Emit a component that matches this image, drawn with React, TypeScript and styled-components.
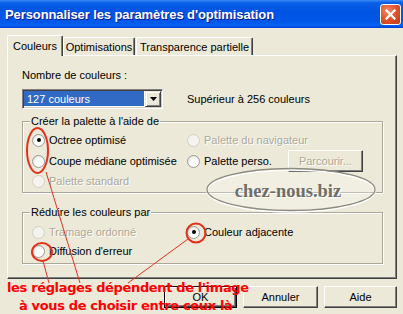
import React from 'react'
import styled, { createGlobalStyle } from 'styled-components'

const GlobalStyle = createGlobalStyle`
  html, body {
    margin: 0;
    padding: 0;
    background: #ece9d8;
  }
  body {
    width: 403px;
    height: 314px;
    overflow: hidden;
  }
`

const Window = styled.div`
  position: relative;
  width: 403px;
  height: 314px;
  background: #ece9d8;
  font-family: 'Liberation Sans', Arial, sans-serif;
  font-size: 11px;
  color: #000;
  overflow: hidden;
`

const TitleBar = styled.div`
  height: 28px;
  display: flex;
  align-items: center;
  justify-content: space-between;
  padding: 0 2px 0 5px;
  box-sizing: border-box;
  background: linear-gradient(
    180deg,
    #3b8cf6 0%,
    #0a5fe6 10%,
    #0054e3 40%,
    #0058ea 80%,
    #0763f0 90%,
    #003dd7 100%
  );
`

const Title = styled.span`
  color: #fff;
  font-family: 'Liberation Sans', Arial, sans-serif;
  font-weight: bold;
  font-size: 13px;
  letter-spacing: -0.1px;
  text-shadow: 1px 1px 0 #0f1a8c;
  margin-top: 1px;
`

const CloseButton = styled.div`
  width: 21px;
  height: 21px;
  box-sizing: border-box;
  border: 1px solid #fff;
  border-radius: 3px;
  background: radial-gradient(circle at 35% 30%, #f08a6a 0%, #e0562f 45%, #c2380f 100%);
  display: flex;
  align-items: center;
  justify-content: center;
`

const Body = styled.div`
  padding: 7px 6px 0 7px;
`

const TabStrip = styled.div`
  display: flex;
  align-items: flex-end;
  height: 20px;
`

const Tab = styled.div<{ $active?: boolean; $w: number; $gap?: number }>`
  position: relative;
  z-index: ${p => (p.$active ? 2 : 1)};
  width: ${p => p.$w}px;
  height: ${p => (p.$active ? 21 : 18)}px;
  margin-bottom: ${p => (p.$active ? -1 : 0)}px;
  margin-left: ${p => p.$gap ?? 0}px;
  box-sizing: border-box;
  padding-top: ${p => (p.$active ? 4 : 3)}px;
  line-height: 13px;
  text-align: center;
  background: #ece9d8;
  border-top: 1px solid #fff;
  border-left: 1px solid #fff;
  border-right: 1px solid #404040;
  box-shadow: inset -1px 0 0 #808080;
  border-radius: 2px 2px 0 0;
`

const Panel = styled.div`
  position: relative;
  height: 224px;
  box-sizing: border-box;
  padding: 13px 0 0 14px;
  border-top: 1px solid #fff;
  border-left: 1px solid #fff;
  border-right: 1px solid #404040;
  border-bottom: 1px solid #404040;
  box-shadow: inset -1px -1px 0 #808080;
`

const FieldLabel = styled.div`
  line-height: 13px;
`

const SelectRow = styled.div`
  display: flex;
  align-items: center;
  gap: 24px;
  margin-top: 7px;
`

const Select = styled.div`
  width: 141px;
  height: 20px;
  box-sizing: border-box;
  display: flex;
  padding: 2px;
  background: #fff;
  border: 1px solid;
  border-color: #808080 #fff #fff #808080;
  box-shadow: inset 1px 1px 0 #404040, inset -1px -1px 0 #d4d0c8;
`

const SelectValue = styled.div`
  flex: 1;
  margin: -1px 0 0 -1px;
  background: #316ac5;
  color: #fff;
  line-height: 16px;
  padding-left: 3px;
`

const DropButton = styled.div`
  width: 16px;
  margin: -1px -1px -1px 1px;
  box-sizing: border-box;
  background: #ece9d8;
  border: 1px solid;
  border-color: #ece9d8 #404040 #404040 #ece9d8;
  box-shadow: inset 1px 1px 0 #fff, inset -1px -1px 0 #808080;
  display: flex;
  align-items: center;
  justify-content: center;
`

const GroupBox = styled.div<{ $top: number; $padTop: number; $padBottom: number }>`
  width: 361px;
  box-sizing: border-box;
  margin-top: ${p => p.$top}px;
  padding: 0 0 ${p => p.$padBottom}px 9px;
  border: 1px solid #aca899;
  box-shadow: inset 1px 1px 0 #fff, 1px 1px 0 #fff;

  & > .rows {
    margin-top: ${p => p.$padTop}px;
  }
`

const GroupTitle = styled.div`
  width: max-content;
  margin: -7px 0 0 -2px;
  padding: 0 1px;
  line-height: 13px;
  background: #ece9d8;
`

const OptionGrid = styled.div<{ $rows: string }>`
  display: grid;
  grid-template-columns: 155px 176px;
  grid-template-rows: ${p => p.$rows};
`

const Cell = styled.div`
  display: flex;
  align-items: center;
  justify-content: space-between;
`

const Option = styled.label<{ $disabled?: boolean }>`
  display: flex;
  align-items: center;
  gap: 4px;
  line-height: 13px;
  white-space: nowrap;
  color: ${p => (p.$disabled ? '#aca899' : '#000')};
  text-shadow: ${p => (p.$disabled ? '1px 1px 0 #fff' : 'none')};
`

const Radio = styled.span<{ $checked?: boolean; $disabled?: boolean }>`
  position: relative;
  flex: none;
  width: 13px;
  height: 13px;
  box-sizing: border-box;
  border-radius: 50%;
  border: 1px solid ${p => (p.$disabled ? '#d2d0c4' : '#9c9b94')};
  background: ${p =>
    p.$disabled
      ? '#f4f3ee'
      : 'radial-gradient(circle at 65% 65%, #ffffff 35%, #dcdbd4 100%)'};

  &::after {
    content: '';
    display: ${p => (p.$checked ? 'block' : 'none')};
    position: absolute;
    left: 3.5px;
    top: 3.5px;
    width: 4px;
    height: 4px;
    border-radius: 50%;
    background: #000;
  }
`

const Button = styled.div<{ $w: number; $default?: boolean; $disabled?: boolean }>`
  width: ${p => p.$w}px;
  height: 22px;
  box-sizing: border-box;
  display: flex;
  align-items: center;
  justify-content: center;
  background: #ece9d8;
  color: ${p => (p.$disabled ? '#aca899' : '#000')};
  text-shadow: ${p => (p.$disabled ? '1px 1px 0 #fff' : 'none')};
  border: 1px solid;
  border-color: ${p => (p.$default ? '#000' : '#fff #404040 #404040 #fff')};
  box-shadow: ${p =>
    p.$default
      ? 'inset 1px 1px 0 #fff, inset -1px -1px 0 #404040, inset -2px -2px 0 #808080'
      : 'inset -1px -1px 0 #808080'};
`

const ButtonRow = styled.div`
  display: flex;
  justify-content: flex-end;
  gap: 6px;
  margin-top: 7px;
`

const Overlay = styled.svg`
  position: absolute;
  left: 0;
  top: 0;
  pointer-events: none;
`

const Note = styled.div`
  position: absolute;
  left: 7px;
  top: 279px;
  font-family: 'DejaVu Sans', Verdana, sans-serif;
  font-weight: bold;
  font-size: 13px;
  letter-spacing: -0.35px;
  line-height: 18px;
  color: #ff0000;
  white-space: nowrap;
`

const NoteLine = styled.div<{ $indent?: number }>`
  padding-left: ${p => p.$indent ?? 0}px;
`

export default function App() {
  return (
    <Window>
      <GlobalStyle />
      <TitleBar>
        <Title>Personnaliser les paramètres d'optimisation</Title>
        <CloseButton>
          <svg width="11" height="11" viewBox="0 0 11 11">
            <path d="M1.5 1.5 L9.5 9.5 M9.5 1.5 L1.5 9.5" stroke="#fff" strokeWidth="2.2" strokeLinecap="square" />
          </svg>
        </CloseButton>
      </TitleBar>

      <Body>
        <TabStrip>
          <Tab $active $w={56}>Couleurs</Tab>
          <Tab $w={72}>Optimisations</Tab>
          <Tab $w={117} $gap={1}>Transparence partielle</Tab>
        </TabStrip>

        <Panel>
          <FieldLabel>Nombre de couleurs :</FieldLabel>
          <SelectRow>
            <Select>
              <SelectValue>127 couleurs</SelectValue>
              <DropButton>
                <svg width="7" height="4" viewBox="0 0 7 4">
                  <path d="M0 0 H7 L3.5 4 Z" fill="#000" />
                </svg>
              </DropButton>
            </Select>
            <span>Supérieur à 256 couleurs</span>
          </SelectRow>

          <GroupBox $top={12} $padTop={2} $padBottom={2}>
            <GroupTitle>Créer la palette à l'aide de</GroupTitle>
            <OptionGrid className="rows" $rows="20px 22px 18px">
              <Cell>
                <Option><Radio $checked />Octree optimisé</Option>
              </Cell>
              <Cell>
                <Option $disabled><Radio $disabled />Palette du navigateur</Option>
              </Cell>
              <Cell>
                <Option><Radio />Coupe médiane optimisée</Option>
              </Cell>
              <Cell>
                <Option><Radio />Palette perso.</Option>
                <Button $w={75} $disabled>Parcourir...</Button>
              </Cell>
              <Cell>
                <Option $disabled><Radio $disabled />Palette standard</Option>
              </Cell>
            </OptionGrid>
          </GroupBox>

          <GroupBox $top={19} $padTop={3} $padBottom={2}>
            <GroupTitle>Réduire les couleurs par</GroupTitle>
            <OptionGrid className="rows" $rows="20px 19px">
              <Cell>
                <Option $disabled><Radio $disabled />Tramage ordonné</Option>
              </Cell>
              <Cell>
                <Option><Radio $checked />Couleur adjacente</Option>
              </Cell>
              <Cell>
                <Option><Radio />Diffusion d'erreur</Option>
              </Cell>
            </OptionGrid>
          </GroupBox>
        </Panel>

        <ButtonRow>
          <Button $w={73} $default>OK</Button>
          <Button $w={75}>Annuler</Button>
          <Button $w={73}>Aide</Button>
        </ButtonRow>
      </Body>

      <Overlay width="403" height="314" viewBox="0 0 403 314">
        <ellipse cx="291" cy="191" rx="84" ry="21" fill="none" stroke="#ffffff" strokeWidth="1.5" />
        <ellipse cx="291" cy="189.5" rx="84" ry="21" fill="rgba(255,255,255,0.25)" stroke="#8c8b80" strokeWidth="1.3" />
        <text x="289" y="198" textAnchor="middle" fontFamily="'Liberation Serif', 'Times New Roman', serif" fontWeight="bold" fontSize="18.5" fill="#fff">
          chez-nous.biz
        </text>
        <text x="288" y="197" textAnchor="middle" fontFamily="'Liberation Serif', 'Times New Roman', serif" fontWeight="bold" fontSize="18.5" fill="#6f6e66">
          chez-nous.biz
        </text>

        <ellipse cx="37.5" cy="150.5" rx="10.5" ry="22.5" fill="none" stroke="#e2321c" strokeWidth="2" />
        <line x1="46" y1="172" x2="80" y2="283" stroke="#e2321c" strokeWidth="1" />
        <ellipse cx="42" cy="252" rx="10" ry="9" fill="none" stroke="#e2321c" strokeWidth="2" />
        <line x1="43" y1="261" x2="49" y2="283" stroke="#e2321c" strokeWidth="1" />
        <ellipse cx="196" cy="233" rx="9.5" ry="9.5" fill="none" stroke="#e2321c" strokeWidth="2" />
        <line x1="188" y1="239" x2="128" y2="283" stroke="#e2321c" strokeWidth="1" />
      </Overlay>

      <Note>
        <NoteLine>les réglages dépendent de l'image</NoteLine>
        <NoteLine $indent={12}>à vous de choisir entre ceux là</NoteLine>
      </Note>
    </Window>
  )
}
